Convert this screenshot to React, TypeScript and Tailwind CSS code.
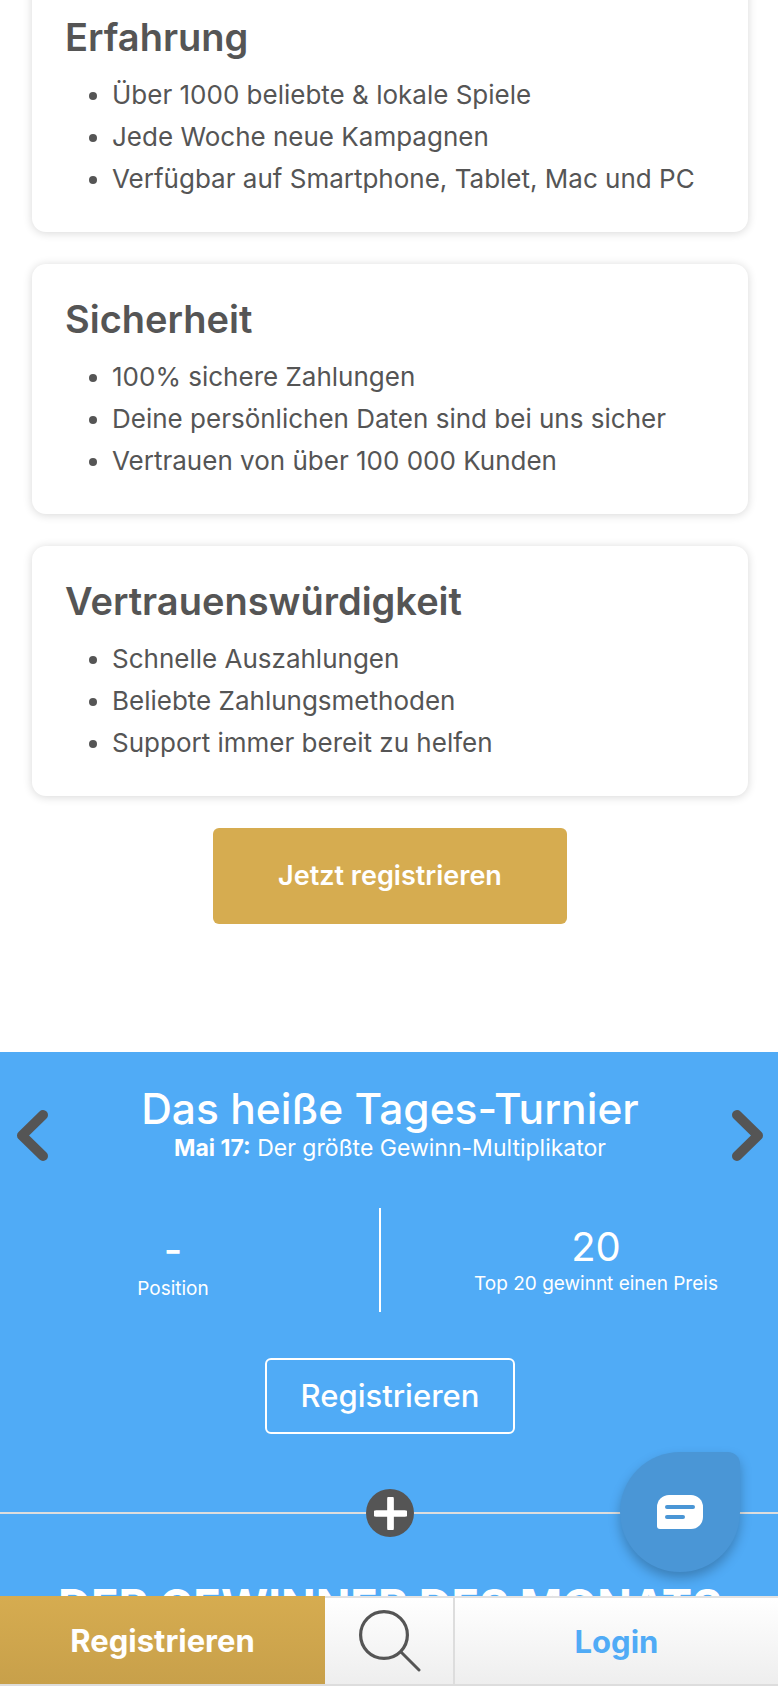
const cards = [
  {
    title: 'Erfahrung',
    items: ['Über 1000 beliebte & lokale Spiele', 'Jede Woche neue Kampagnen', 'Verfügbar auf Smartphone, Tablet, Mac und PC'],
  },
  {
    title: 'Sicherheit',
    items: ['100% sichere Zahlungen', 'Deine persönlichen Daten sind bei uns sicher', 'Vertrauen von über 100 000 Kunden'],
  },
  {
    title: 'Vertrauenswürdigkeit',
    items: ['Schnelle Auszahlungen', 'Beliebte Zahlungsmethoden', 'Support immer bereit zu helfen'],
  },
];

function Card({ title, items }: { title: string; items: string[] }) {
  return (
    <div className="h-[250px] rounded-[14px] bg-white px-[33px] pt-[35px] shadow-[0_1px_10px_rgba(0,0,0,0.16)]">
      <h3 className="text-[38px] leading-[40px] font-semibold text-[#555]">{title}</h3>
      <ul className="mt-[17px] list-disc pl-[47px] text-[26px] leading-[42px] text-[#555] marker:text-[#555]">
        {items.map((item) => (
          <li key={item}>{item}</li>
        ))}
      </ul>
    </div>
  );
}

function Chevron({ right }: { right?: boolean }) {
  return (
    <svg
      viewBox="0 0 33 51"
      className={right ? 'absolute top-[58px] right-[16px] h-[51px] w-[33px]' : 'absolute top-[58px] left-[16px] h-[51px] w-[33px]'}
    >
      <path
        d={right ? 'M6 5L27 25.5L6 46' : 'M27 5L6 25.5L27 46'}
        fill="none"
        stroke="#555"
        strokeWidth="10"
        strokeLinecap="round"
        strokeLinejoin="round"
      />
    </svg>
  );
}

export default function App() {
  return (
    <div className="relative h-[1686px] overflow-hidden bg-white font-['Inter',sans-serif]">
      <div className="-mt-[18px] flex w-[780px] flex-col gap-[32px] px-[32px]">
        {cards.map((c) => (
          <Card key={c.title} title={c.title} items={c.items} />
        ))}
      </div>

      <div className="mt-[32px] flex w-[780px] justify-center">
        <button className="h-[96px] w-[354px] rounded-[6px] bg-[#d6ac50] text-[27px] font-semibold text-white">
          Jetzt registrieren
        </button>
      </div>

      <section className="relative mt-[128px] h-[544px] w-[780px] overflow-hidden bg-[#50abf6] text-white">
        <Chevron />
        <Chevron right />

        <div className="pt-[31px] text-center">
          <h2 className="text-[42.5px] leading-[52px] font-medium">Das heiße Tages-Turnier</h2>
          <p className="text-[23px] leading-[26px]">
            <strong className="font-bold">Mai 17:</strong> Der größte Gewinn-Multiplikator
          </p>
        </div>

        <div className="mt-[47px] flex h-[104px]">
          <div className="flex w-[346px] shrink-0 flex-col items-center pt-[22px]">
            <div className="text-[40px] leading-[40px] font-medium">-</div>
            <div className="mt-[6px] text-[19px] leading-[26px]">Position</div>
          </div>
          <div className="ml-[33px] w-[2px] shrink-0 bg-white" />
          <div className="flex w-[430px] shrink-0 flex-col items-center pt-[19px]">
            <div className="text-[40px] leading-[40px]">20</div>
            <div className="mt-[4px] text-[19px] leading-[26px]">Top 20 gewinnt einen Preis</div>
          </div>
        </div>

        <div className="mt-[46px] flex justify-center">
          <button className="h-[76px] w-[250px] rounded-[6px] border-2 border-white text-[31px] font-medium">
            Registrieren
          </button>
        </div>

        <div className="relative mt-[78px] h-[2px] w-full bg-[#ddd]">
          <div className="absolute top-1/2 left-1/2 flex h-[48px] w-[48px] -translate-x-1/2 -translate-y-1/2 items-center justify-center rounded-full bg-[#555]">
            <svg viewBox="0 0 32 32" className="h-[33px] w-[33px]">
              <path d="M16 2v28M2 16h28" stroke="#fff" strokeWidth="6.5" strokeLinecap="round" />
            </svg>
          </div>
        </div>

        <h2 className="mt-[67px] text-center text-[45.5px] leading-[50px] font-bold">DER GEWINNER DES MONATS</h2>
      </section>

      {/* chat bubble */}
      <div className="absolute top-[1452px] left-[620px] flex h-[120px] w-[120px] items-center justify-center rounded-[60px_12px_60px_60px] bg-[#4a96d6] shadow-[0_6px_12px_rgba(0,0,0,0.25)]">
        <svg viewBox="0 0 46 34" className="h-[34px] w-[46px]">
          <path d="M12 0h22a12 12 0 0 1 12 12v10a12 12 0 0 1-12 12H3a3 3 0 0 1-3-3V12A12 12 0 0 1 12 0z" fill="#fff" />
          <rect x="8" y="10" width="30" height="4" rx="2" fill="#4a96d6" />
          <rect x="8" y="20" width="20" height="4" rx="2" fill="#4a96d6" />
        </svg>
      </div>

      {/* bottom bar */}
      <div className="absolute top-[1596px] left-0 flex h-[90px] w-full border-t-2 border-b-2 border-t-[#e2e2e2] border-b-[#ddd] bg-gradient-to-b from-white to-[#eee]">
        <button className="-mt-[2px] h-[88px] w-[325px] bg-gradient-to-b from-[#d6ac50] to-[#c8a04a] pt-[3px] text-[31px] font-bold text-white">
          Registrieren
        </button>
        <div className="ml-[2px] flex w-[128px] items-center justify-center border-r-2 border-[#ddd]">
          <svg viewBox="0 0 62 62" className="h-[62px] w-[62px]">
            <circle cx="25" cy="25" r="23.4" fill="none" stroke="#555" strokeWidth="3.2" />
            <path d="M42 42L60 60" stroke="#555" strokeWidth="3" strokeLinecap="round" />
          </svg>
        </div>
        <button className="flex-1 pt-[2px] text-[31px] font-bold text-[#50abf6]">Login</button>
      </div>
    </div>
  );
}
